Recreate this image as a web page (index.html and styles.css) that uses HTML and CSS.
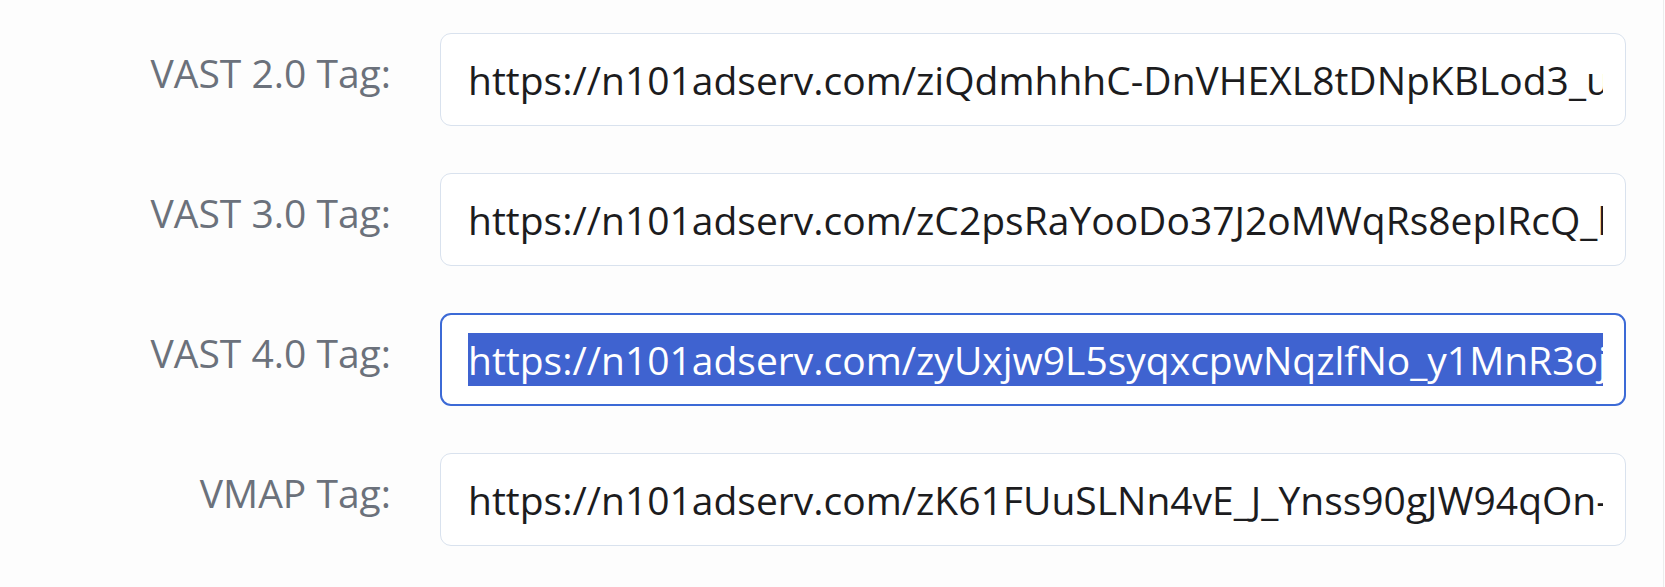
FILE: index.html
```html
<!DOCTYPE html>
<html lang="en">
<head>
<meta charset="utf-8">
<title>VAST Tags</title>
<link rel="stylesheet" href="styles.css">
</head>
<body>
<div class="page">
  <div class="form">
    <div class="label">VAST 2.0 Tag:</div>
    <div class="field"><div class="value">https://n101adserv.com/ziQdmhhhC-DnVHEXL8tDNpKBLod3_uVx2kqA9rPw</div></div>

    <div class="label">VAST 3.0 Tag:</div>
    <div class="field"><div class="value">https://n101adserv.com/zC2psRaYooDo37J2oMWqRs8epIRcQ_l8HvTq2mWs</div></div>

    <div class="label">VAST 4.0 Tag:</div>
    <div class="field focused"><div class="value"><span class="sel">https://n101adserv.com/zyUxjw9L5syqxcpwNqzlfNo_y1MnR3ojP4dGk7Ls</span></div></div>

    <div class="label">VMAP Tag:</div>
    <div class="field"><div class="value">https://n101adserv.com/zK61FUuSLNn4vE_J_Ynss90gJW94qOn-b3TzR8eX</div></div>
  </div>
</div>
</body>
</html>
```

FILE: styles.css
```css
html, body {
  margin: 0;
  padding: 0;
  background: #fdfdfd;
}

.page {
  width: 1663px;
  height: 587px;
  border-right: 1px solid #ececec;
  box-sizing: content-box;
  font-family: "Open Sans", "Liberation Sans", sans-serif;
}

.form {
  display: grid;
  grid-template-columns: 391px 1186px;
  grid-auto-rows: 93px;
  column-gap: 49px;
  row-gap: 47px;
  padding-top: 33px;
}

.label {
  text-align: right;
  font-size: 39px;
  line-height: 53px;
  padding-top: 13px;
  color: #6b717b;
  white-space: nowrap;
}

.field {
  box-sizing: border-box;
  height: 93px;
  border: 1.5px solid #d9e2ee;
  border-radius: 11px;
  background: #ffffff;
  display: flex;
  align-items: center;
  padding: 0 22px 0 27px;
}

.field.focused {
  border: 2px solid #3c6ad6;
  padding: 0 21px 0 26px;
}

.value {
  flex: 1;
  min-width: 0;
  overflow: hidden;
  white-space: nowrap;
  font-size: 39px;
  line-height: 53px;
  color: #1c1c1e;
}

.sel {
  background: #3f63d0;
  color: #ffffff;
}
```
